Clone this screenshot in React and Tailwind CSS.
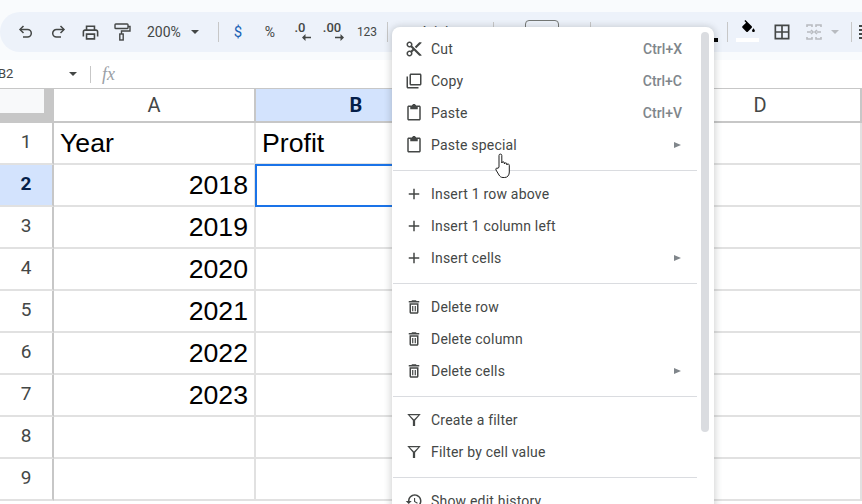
import React from 'react';

// material style icon, all paths on a 24 box
const Icon = ({ d, size = 20, className = 'text-[#444746]', children }) => (
  <svg width={size} height={size} viewBox="0 0 24 24" fill="currentColor" className={className}>
    {d && <path d={d} fillRule="evenodd" />}
    {children}
  </svg>
);

const paths = {
  cut: 'M9.64 7.64c.23-.5.36-1.05.36-1.64 0-2.21-1.79-4-4-4S2 3.79 2 6s1.79 4 4 4c.59 0 1.14-.13 1.64-.36L10 12l-2.36 2.36C7.14 14.13 6.59 14 6 14c-2.21 0-4 1.79-4 4s1.79 4 4 4 4-1.79 4-4c0-.59-.13-1.14-.36-1.64L12 14l7 7h3v-1L9.64 7.64zM6 8c-1.1 0-2-.89-2-2s.9-2 2-2 2 .89 2 2-.9 2-2 2zm0 12c-1.1 0-2-.89-2-2s.9-2 2-2 2 .89 2 2-.9 2-2 2zM19 3l-6 6 2 2 7-7V3h-3z',
  copy: 'M4 6H2v14c0 1.1.9 2 2 2h14v-2H4V6zm16-4H8c-1.1 0-2 .9-2 2v12c0 1.1.9 2 2 2h12c1.1 0 2-.9 2-2V4c0-1.1-.9-2-2-2zm0 14H8V4h12v12z',
  paste: 'M19 2h-4.18C14.4.84 13.3 0 12 0c-1.3 0-2.4.84-2.82 2H5c-1.1 0-2 .9-2 2v16c0 1.1.9 2 2 2h14c1.1 0 2-.9 2-2V4c0-1.1-.9-2-2-2zm0 18H5V4h2v3h10V4h2v16z',
  plus: 'M19 13h-6v6h-2v-6H5v-2h6V5h2v6h6v2z',
  trash: 'M6 19c0 1.1.9 2 2 2h8c1.1 0 2-.9 2-2V7H6v12zM8 9h8v10H8V9zm7.5-5l-1-1h-5l-1 1H5v2h14V4zM9.5 10.5h1.6v7H9.5zM12.9 10.5h1.6v7h-1.6z',
  filter: 'M3 4h18l-7.500 8.500V20h-3v-7.500L3 4zm3.300 1.500L12 11.200l5.700-5.700H6.300z',
  history: 'M13 3c-4.97 0-9 4.03-9 9H1l3.89 3.89.07.14L9 12H6c0-3.87 3.13-7 7-7s7 3.13 7 7-3.13 7-7 7c-1.93 0-3.68-.79-4.94-2.06l-1.42 1.42C8.27 19.99 10.51 21 13 21c4.97 0 9-4.03 9-9s-4.03-9-9-9zm-1 5v5l4.28 2.54.72-1.21-3.5-2.08V8H12z',
  print: 'M19 8h-1V3H6v5H5c-1.66 0-3 1.34-3 3v6h4v4h12v-4h4v-6c0-1.66-1.34-3-3-3zM8 5h8v3H8V5zm8 14H8v-4h8v4zm2-2v-4H6v4H4v-6c0-.55.45-1 1-1h14c.55 0 1 .45 1 1v6h-2z',
  borders: 'M3 3v18h18V3H3zm8 16H5v-6h6v6zm0-8H5V5h6v6zm8 8h-6v-6h6v6zm0-8h-6V5h6v6z',
  fill: 'M16.56 8.94L7.62 0 6.21 1.41l2.38 2.38-5.15 5.15c-.59.59-.59 1.54 0 2.12l5.5 5.5c.29.29.68.44 1.06.44s.77-.15 1.06-.44l5.5-5.5c.59-.58.59-1.53 0-2.12zM19 11.5s-2 2.17-2 3.5c0 1.1.9 2 2 2s2-.9 2-2c0-1.33-2-3.5-2-3.5z',
};

const ToolBtn = ({ children, className = '' }) => (
  <div className={`w-8 h-10 shrink-0 flex items-center justify-center ${className}`}>{children}</div>
);

const Divider = ({ className = '' }) => <div className={`w-px h-5 shrink-0 bg-[#c7c7c7] ${className}`} />;

const Caret = ({ className = '' }) => (
  <div className={`w-0 h-0 border-x-[4px] border-x-transparent border-t-[4px] border-t-[#444746] ${className}`} />
);

const Toolbar = () => (
  <div className="mt-3 h-10 w-[900px] shrink-0 flex items-center pl-[10px] bg-[#edf2fa] rounded-l-[20px]">
    <ToolBtn>
      <svg width="18" height="18" viewBox="0 0 18 18" fill="none" stroke="#444746" strokeWidth="1.5">
        <path d="M6.500 3 3 6.500 6.500 10" />
        <path d="M3 6.500h7.500a3.800 3.800 0 0 1 0 7.600H6" />
      </svg>
    </ToolBtn>
    <ToolBtn>
      <svg width="18" height="18" viewBox="0 0 18 18" fill="none" stroke="#444746" strokeWidth="1.5">
        <path d="M11.500 3 15 6.500 11.500 10" />
        <path d="M15 6.500H7.500a3.800 3.800 0 0 0 0 7.600H12" />
      </svg>
    </ToolBtn>
    <ToolBtn><Icon d={paths.print} size={19} /></ToolBtn>
    <ToolBtn>
      <svg width="18" height="20" viewBox="0 0 18 20" fill="none" stroke="#444746" strokeWidth="1.4">
        <rect x="2" y="2" width="13" height="4.500" rx="0.800" />
        <path d="M15 4.500h2v4.500H8.500v3" />
        <rect x="6.800" y="12" width="3.400" height="6" />
      </svg>
    </ToolBtn>
    <div className="w-[72px] shrink-0 flex items-center pl-[9px] text-[14px] text-[#444746]">
      <span>200%</span>
      <Caret className="ml-[10px]" />
    </div>
    <Divider className="ml-2" />
    <ToolBtn className="ml-[3px] text-[15px] text-[#1a62b5]">$</ToolBtn>
    <ToolBtn className="text-[14px] text-[#444746]">%</ToolBtn>
    <ToolBtn className="relative">
      <span className="text-[13px] font-medium text-[#444746] -mt-2 -ml-1">.0</span>
      <svg width="9" height="7" viewBox="0 0 9 7" className="absolute left-[16px] top-[22px]" fill="#444746">
        <path d="M0 3.500 3.500 0v2.700H9v1.600H3.500V7z" />
      </svg>
    </ToolBtn>
    <ToolBtn className="relative">
      <span className="text-[13px] font-medium text-[#444746] -mt-2 -ml-1">.00</span>
      <svg width="9" height="7" viewBox="0 0 9 7" className="absolute left-[17px] top-[22px]" fill="#444746">
        <path d="M9 3.500 5.500 0v2.700H0v1.600h5.500V7z" />
      </svg>
    </ToolBtn>
    <ToolBtn className="ml-px text-[12px] text-[#444746]">123</ToolBtn>
    <Divider className="ml-1" />
    {/* font controls, nearly all of it sits under the context menu */}
    <div className="w-[105px] shrink-0 pl-[32px] text-[14px] text-[#444746]">Arial</div>
    <Divider />
    <div className="ml-[31px] w-[34px] h-6 shrink-0 border border-[#747775] rounded-[4px]" />
    <Divider className="ml-[31px]" />
    <div className="w-[136px] h-10 shrink-0 flex items-end justify-end">
      <div className="w-[12px] h-[4px] mb-[10px] mr-[9px] bg-black" />
    </div>
    <Divider />
    <ToolBtn className="w-[38px] flex-col relative ml-px">
      <Icon d={paths.fill} size={17} className="text-black -mt-2" />
      <div className="absolute left-[7px] top-[26px] w-[23px] h-1 bg-white" />
    </ToolBtn>
    <ToolBtn className="ml-[-1px]"><Icon d={paths.borders} size={20} /></ToolBtn>
    <ToolBtn className="-ml-px pl-[2px]">
      <svg width="18" height="18" viewBox="0 0 18 18" fill="none" stroke="#b8bbc0" strokeWidth="1.6">
        <path d="M2 4V2h5v2M11 4V2h5v2M2 14v2h5v-2M11 14v2h5v-2" />
        <path d="M2 9h4M6 7l2 2-2 2M16 9h-4M12 7l-2 2 2 2" />
      </svg>
    </ToolBtn>
    <div className="w-[22px] shrink-0 flex items-center pl-[2px]">
      <div className="w-0 h-0 border-x-[4px] border-x-transparent border-t-[4px] border-t-[#b8bbc0]" />
    </div>
    <Divider />
    <div className="ml-[7px] w-5 flex flex-col gap-[2px]">
      <div className="h-[2px] bg-[#444746]" />
      <div className="h-[2px] bg-[#444746]" />
      <div className="h-[2px] bg-[#444746]" />
      <div className="h-[2px] bg-[#444746]" />
    </div>
  </div>
);

const FormulaBar = () => (
  <div className="mt-2 h-7 shrink-0 flex items-center bg-white text-[#444746]">
    <span className="w-[71px] -ml-[2px] text-[13px] shrink-0">B2</span>
    <Caret />
    <Divider className="ml-[13px] h-[17px]" />
    <span className="ml-[11px] text-[18px] italic text-[#9aa0a6] font-['Liberation_Serif',serif]">fx</span>
  </div>
);

const ColHead = ({ label, active }) => (
  <div
    className={`w-[202px] shrink-0 h-full flex items-center justify-center text-[20px] border-r-2 border-r-[#c7c7c7] ${
      active ? 'bg-[#d3e3fd] font-bold text-[#041e49]' : 'bg-white text-[#444746]'
    }`}
  >
    {label}
  </div>
);

const rows = [
  { n: 1, a: 'Year', b: 'Profit', head: true },
  { n: 2, a: '2018', selected: true },
  { n: 3, a: '2019' },
  { n: 4, a: '2020' },
  { n: 5, a: '2021' },
  { n: 6, a: '2022' },
  { n: 7, a: '2023' },
  { n: 8 },
  { n: 9 },
];

const Grid = () => (
  <div className="flex-1 bg-white border-t border-[#c7c7c7]">
    <div className="h-[34px] flex border-b-2 border-[#c7c7c7]">
      <div className="w-[54px] shrink-0 h-full bg-[#c7c7c7]">
        <div className="w-[44px] h-[24px] bg-[#f8f9fa]" />
      </div>
      <ColHead label="A" />
      <ColHead label="B" active />
      <ColHead label="C" />
      <ColHead label="D" />
    </div>
    {rows.map((r) => (
      <div key={r.n} className="h-[42px] flex font-['Liberation_Sans',Arial,sans-serif] text-[26.67px] text-black">
        <div
          className={`w-[54px] shrink-0 flex items-center justify-center pb-[2px] font-['Roboto',sans-serif] text-[19px] border-r-2 border-r-[#c7c7c7] border-b-2 border-b-[#e1e1e1] ${
            r.selected ? 'bg-[#d3e3fd] font-bold text-[#041e49]' : 'text-[#444746]'
          }`}
        >
          {r.n}
        </div>
        <div className={`w-[202px] shrink-0 flex items-center border-r-2 border-b-2 border-[#e1e1e1] px-[6px] ${r.head ? 'justify-start' : 'justify-end'}`}>
          {r.a}
        </div>
        <div className="relative w-[202px] shrink-0 flex items-center border-r-2 border-b-2 border-[#e1e1e1] px-[6px]">
          {r.b}
          {r.selected && <div className="absolute -left-px -top-px w-[203px] h-[43px] border-2 border-[#1a73e8]" />}
        </div>
        <div className="w-[202px] shrink-0 border-r-2 border-b-2 border-[#e1e1e1]" />
        <div className="w-[202px] shrink-0 border-r-2 border-b-2 border-[#e1e1e1]" />
      </div>
    ))}
  </div>
);

const menuGroups = [
  [
    { icon: paths.cut, label: 'Cut', key: 'Ctrl+X' },
    { icon: paths.copy, label: 'Copy', key: 'Ctrl+C' },
    { icon: paths.paste, label: 'Paste', key: 'Ctrl+V' },
    { icon: paths.paste, label: 'Paste special', sub: true },
  ],
  [
    { icon: paths.plus, label: 'Insert 1 row above' },
    { icon: paths.plus, label: 'Insert 1 column left' },
    { icon: paths.plus, label: 'Insert cells', sub: true },
  ],
  [
    { icon: paths.trash, label: 'Delete row' },
    { icon: paths.trash, label: 'Delete column' },
    { icon: paths.trash, label: 'Delete cells', sub: true },
  ],
  [
    { icon: paths.filter, label: 'Create a filter' },
    { icon: paths.filter, label: 'Filter by cell value' },
  ],
  [{ icon: paths.history, label: 'Show edit history' }],
];

const MenuItem = ({ item }) => (
  <div className="h-8 flex items-center pl-[13px] pr-[32px]">
    <Icon d={item.icon} size={18} className="text-[#444746] shrink-0" />
    <span className="ml-[8px] text-[14px] tracking-[0.2px] text-[#444746]">{item.label}</span>
    {item.key && <span className="ml-auto text-[14px] font-medium text-[#80868b]">{item.key}</span>}
    {item.sub && (
      <div className="ml-auto mr-px w-0 h-0 border-y-[3px] border-y-transparent border-l-[7px] border-l-[#80868b]" />
    )}
  </div>
);

const ContextMenu = () => (
  <div className="absolute left-[392px] top-[27px] w-[322px] h-[490px] overflow-hidden bg-white rounded-lg pt-[6px] shadow-[0_1px_6px_2px_rgba(60,64,67,0.2)]">
    {menuGroups.map((group, i) => (
      <div key={i}>
        {i > 0 && (
          <div className="h-[17px] flex items-end pb-[7px] pl-px pr-[17px]">
            <div className="h-px w-full bg-[#dadce0]" />
          </div>
        )}
        {group.map((item) => <MenuItem key={item.label} item={item} />)}
      </div>
    ))}
    <div className="absolute left-[309px] top-[5px] w-2 h-[400px] rounded-full bg-[#dadce0]" />
  </div>
);

const HandCursor = () => (
  <svg width="18" height="26" viewBox="0 0 18 26" className="absolute left-[495px] top-[153px]" fill="#fff" stroke="#1f1f1f" strokeWidth="1" strokeLinejoin="round">
    <path d="M4 14V2.500a1.400 1.400 0 0 1 2.800 0V10c0-1.600 2.600-1.600 2.600 0v1c0-1.500 2.500-1.500 2.500 0v1c0-1.400 2.400-1.300 2.400.2V19c0 3-1.600 5.500-4.600 5.500H8C6 24.500 5 23.500 4 22L1 17c-.8-1.400 1-2.800 2-1.500z" />
  </svg>
);

export default function App() {
  return (
    <div className="relative w-[862px] h-[504px] overflow-hidden flex flex-col bg-[#f9fbfd] font-['Roboto',sans-serif]">
      <Toolbar />
      <FormulaBar />
      <Grid />
      <ContextMenu />
      <HandCursor />
    </div>
  );
}
